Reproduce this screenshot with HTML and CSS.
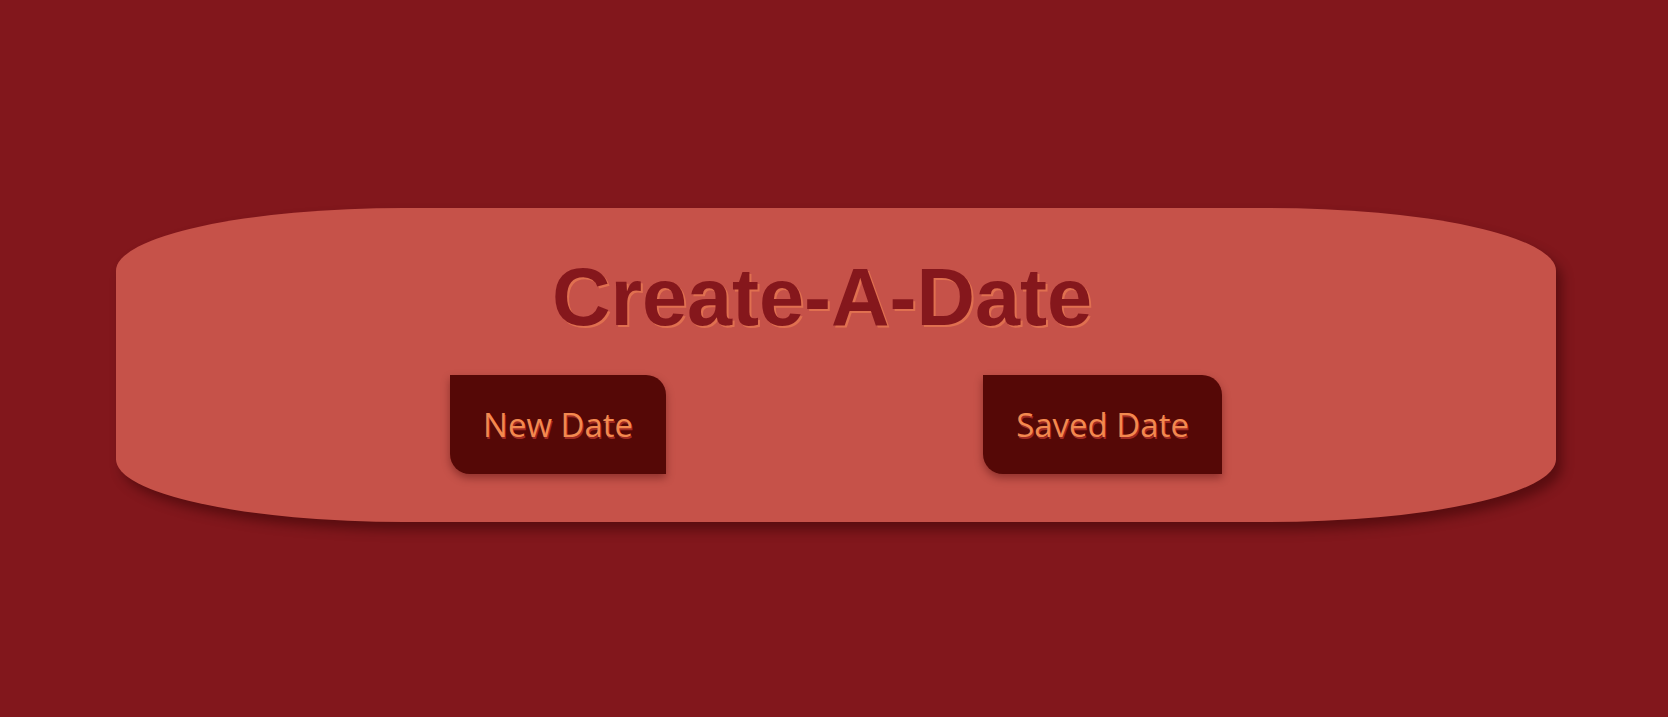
FILE: index.html
```html
<!DOCTYPE html>
<html lang="en">
<head>
<meta charset="utf-8">
<title>Create-A-Date</title>
<link rel="stylesheet" href="styles.css">
</head>
<body>
  <main class="page">
    <section class="card">
      <h1 class="title">Create-A-Date</h1>
      <div class="actions">
        <button class="btn" type="button">New Date</button>
        <button class="btn" type="button">Saved Date</button>
      </div>
    </section>
  </main>
</body>
</html>
```

FILE: styles.css
```css
html, body {
  margin: 0;
  padding: 0;
  background: #82171c;
}

.page {
  display: flex;
  justify-content: center;
  padding-top: 208px;
  min-height: 717px;
  box-sizing: border-box;
}

.card {
  width: 1440px;
  height: 314px;
  box-sizing: border-box;
  padding: 49px 0 48px;
  margin-left: 4px;
  background: #c65249;
  border-radius: 20% / 20%;
  box-shadow: 6px 8px 12px rgba(40, 0, 0, 0.45);
  display: flex;
  flex-direction: column;
  align-items: center;
}

.title {
  margin: 0 28px 0 0;
  font-family: "Liberation Sans", Arial, sans-serif;
  font-weight: bold;
  font-size: 81px;
  line-height: 80px;
  color: #85171c;
  text-shadow: 2px 2px 0 #e07050;
}

.actions {
  margin-top: 38px;
  display: flex;
  justify-content: center;
  gap: 317px;
}

.btn {
  height: 99px;
  padding: 0 33px;
  border: none;
  background: #550806;
  color: #f3894f;
  font-family: "Open Sans", "Noto Sans", sans-serif;
  font-size: 33px;
  text-shadow: 1px 2px 0 #a02a22;
  border-radius: 0 20px 0 20px;
  box-shadow: 0 4px 8px rgba(60, 0, 0, 0.4);
  display: flex;
  align-items: center;
  cursor: pointer;
}
```
